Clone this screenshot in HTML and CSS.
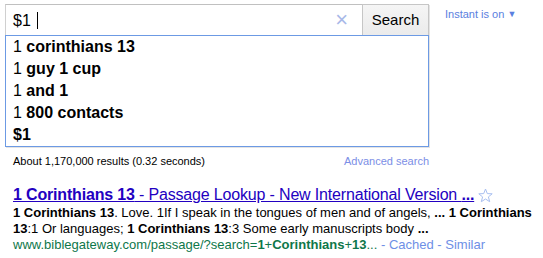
FILE: index.html
```html
<!DOCTYPE html>
<html lang="en">
<head>
    <meta charset="UTF-8">
    <title>$1 - Google Search</title>
    <link rel="stylesheet" href="styles.css">
</head>
<body>
    <div class="top">
        <div class="search">
            <div class="search-row">
                <div class="query">
                    <span class="query-text">$1</span><span class="caret"></span>
                    <span class="clear">&times;</span>
                </div>
                <button class="search-btn">Search</button>
            </div>
            <ul class="suggestions">
                <li>1 <b>corinthians 13</b></li>
                <li>1 <b>guy 1 cup</b></li>
                <li>1 <b>and 1</b></li>
                <li>1 <b>800 contacts</b></li>
                <li><b>$1</b></li>
            </ul>
        </div>
        <a class="instant" href="#">Instant is on <span class="arrow">&#9660;</span></a>
    </div>

    <div class="stats">
        <span>About 1,170,000 results (0.32 seconds)</span>
        <a href="#">Advanced search</a>
    </div>

    <div class="result">
        <h3 class="title">
            <a href="#"><b>1 Corinthians 13</b> - Passage Lookup - New International Version <b>...</b></a>
            <svg class="star" width="15" height="15" viewBox="0 0 15 15">
                <path d="M7.5 1 L9.3 5.6 L14.2 5.8 L10.4 8.9 L11.7 13.7 L7.5 11 L3.3 13.7 L4.6 8.9 L0.8 5.8 L5.7 5.6 Z" fill="none" stroke="#a8bff0" stroke-width="1"/>
            </svg>
        </h3>
        <div class="snippet">
            <b>1 Corinthians 13</b>. Love. 1If I speak in the tongues of men and of angels, <b>...</b> <b>1 Corinthians 13</b>:1 Or languages; <b>1 Corinthians 13</b>:3 Some early manuscripts body <b>...</b>
        </div>
        <div class="url">
            <span class="green">www.biblegateway.com/passage/?search=<b>1</b>+<b>Corinthians</b>+<b>13</b>...</span>
            - <a href="#">Cached</a> - <a href="#">Similar</a>
        </div>
    </div>
</body>
</html>
```

FILE: styles.css
```css
/* Page */
body {
    margin: 0;
    font-family: Arial, "Liberation Sans", sans-serif;
    color: #000;
    background: #fff;
}

a {
    text-decoration: none;
}

/* Search box + instant link */
.top {
    display: flex;
    align-items: flex-start;
    padding: 4px 0 0 5px;
}

.search {
    width: 424px;
    box-shadow: 1px 1px 0 #e4e4e4;
}

.search-row {
    display: flex;
    height: 31px;
}

.query {
    flex: 1;
    display: flex;
    align-items: center;
    border-top: 1px solid #c0c0c0;
    border-left: 1px solid #d0d0d0;
    padding-left: 7px;
    font-size: 16px;
}

.query-text {
    margin-top: 1px;
}

.caret {
    width: 1px;
    height: 17px;
    background: #000;
    margin-left: 6px;
    margin-top: 1px;
}

.clear {
    margin-left: auto;
    margin-right: 14px;
    color: #a9b8e8;
    font-size: 22px;
    line-height: 1;
}

.search-btn {
    width: 67px;
    height: 31px;
    border: 1px solid #c6c6c6;
    border-bottom: none;
    background: linear-gradient(#f5f5f5, #ebebeb);
    font-family: Arial, "Liberation Sans", sans-serif;
    font-size: 15px;
    color: #000;
    padding: 0 0 1px;
}

.suggestions {
    list-style: none;
    margin: 0;
    padding: 0;
    border: 1px solid #6c9ae4;
}

.suggestions li {
    height: 22px;
    line-height: 22px;
    padding-left: 7px;
    font-size: 16px;
}

.instant {
    margin: 4px 0 0 16px;
    font-size: 11px;
    color: #5a80e0;
}

.instant .arrow {
    font-size: 9px;
    position: relative;
    top: -1px;
}

/* Results count line */
.stats {
    display: flex;
    justify-content: space-between;
    width: 416px;
    margin: 8px 0 0 13px;
    font-size: 11px;
}

.stats a {
    color: #7b8ee6;
}

/* Single result */
.result {
    margin: 18px 0 0 13px;
}

.title {
    margin: 0;
    font-size: 16px;
    font-weight: normal;
    line-height: 20px;
    letter-spacing: -0.17px;
    display: flex;
    align-items: center;
}

.title a {
    color: #2200c1;
    text-decoration: underline;
}

.star {
    margin-left: 4px;
}

.snippet {
    font-size: 13px;
    line-height: 16px;
}

.url {
    font-size: 13px;
    line-height: 15px;
    color: #6e8fe6;
}

.url .green {
    color: #0e774a;
}

.url a {
    color: #6e8fe6;
}
```
